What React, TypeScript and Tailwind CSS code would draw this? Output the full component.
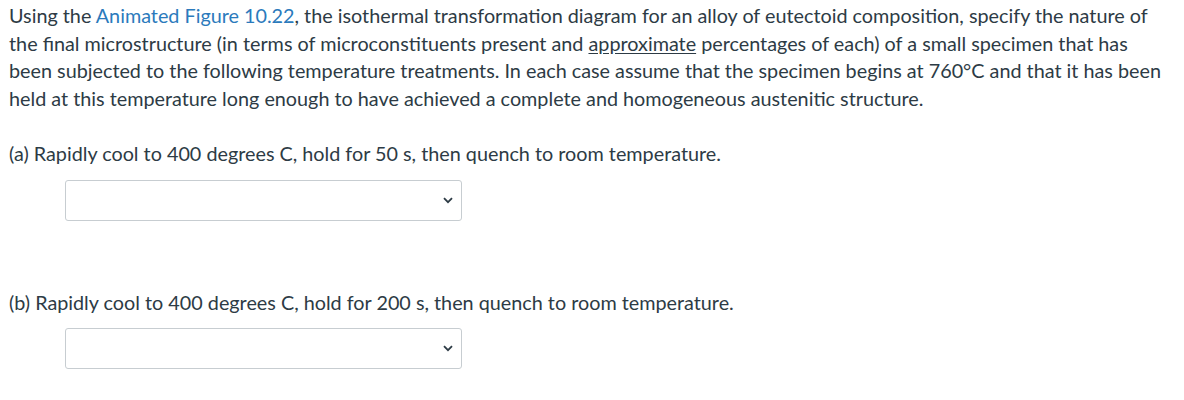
function Dropdown() {
  return (
    <div className="ml-[56px] w-[397px] h-[41px] border border-[#c7cdd1] rounded-[3px] bg-white flex items-center justify-end pr-[8px]">
      <svg width="10" height="7" viewBox="0 0 10 7" fill="none">
        <path d="M1 1.2 L5 5.2 L9 1.2" stroke="#2d3b45" strokeWidth="1.8" />
      </svg>
    </div>
  );
}

export default function App() {
  return (
    <div className="w-[1184px] h-[400px] bg-white text-[#2d3b45] text-[19.8px] leading-[27.7px] font-['Lato',sans-serif] px-[9px] pt-[2px]">
      <p className="w-[1152px]">
        Using the <span className="text-[#2b7abc]">Animated Figure 10.22</span>, the isothermal transformation diagram for an alloy of eutectoid composition, specify the nature of the final microstructure (in terms of microconstituents present and <u className="underline-offset-2">approximate</u> percentages of each) of a small specimen that has been subjected to the following temperature treatments. In each case assume that the specimen begins at 760°C and that it has been held at this temperature long enough to have achieved a complete and homogeneous austenitic structure.
      </p>
      <p className="mt-[27px]">(a) Rapidly cool to 400 degrees C, hold for 50 s, then quench to room temperature.</p>
      <div className="mt-[12px]">
        <Dropdown />
      </div>
      <p className="mt-[68px]">(b) Rapidly cool to 400 degrees C, hold for 200 s, then quench to room temperature.</p>
      <div className="mt-[12px]">
        <Dropdown />
      </div>
    </div>
  );
}
